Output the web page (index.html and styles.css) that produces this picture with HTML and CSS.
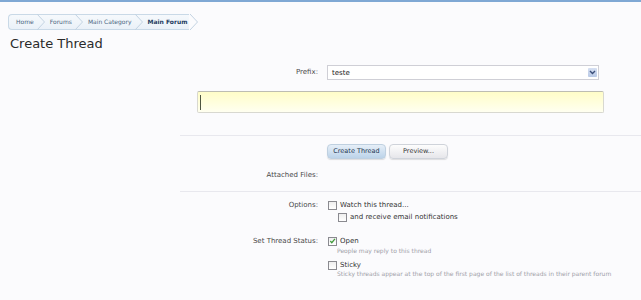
FILE: index.html
```html
<!DOCTYPE html>
<html>
<head>
<meta charset="utf-8">
<title>Create Thread</title>
<link rel="stylesheet" href="styles.css">
</head>
<body>
<div class="topbar"></div>
<nav class="breadcrumb">
  <span class="crumb first">Home</span>
  <svg class="chev" width="10" height="16" viewBox="0 0 10 16"><polyline points="1,0 8.5,8 1,16" fill="none" stroke="#c3d3e2" stroke-width="1"/></svg>
  <span class="crumb">Forums</span>
  <svg class="chev" width="10" height="16" viewBox="0 0 10 16"><polyline points="1,0 8.5,8 1,16" fill="none" stroke="#c3d3e2" stroke-width="1"/></svg>
  <span class="crumb">Main Category</span>
  <svg class="chev" width="10" height="16" viewBox="0 0 10 16"><polyline points="1,0 8.5,8 1,16" fill="none" stroke="#c3d3e2" stroke-width="1"/></svg>
  <span class="crumb current">Main Forum</span>
  <svg class="chev last" width="10" height="16" viewBox="0 0 10 16"><polyline points="1,0 8.5,8 1,16" fill="none" stroke="#c3d3e2" stroke-width="1"/></svg>
</nav>
<h1 class="title">Create Thread</h1>

<form class="form">
  <div class="row prefix-row">
    <div class="label">Prefix:</div>
    <div class="control">
      <div class="select">
        <span class="select-text">teste</span>
        <span class="select-btn"><svg width="7" height="5" viewBox="0 0 7 5"><polyline points="1,1 3.5,3.5 6,1" fill="none" stroke="#3b4f7a" stroke-width="1.4"/></svg></span>
      </div>
    </div>
  </div>

  <div class="editor"><span class="caret"></span></div>

  <div class="divider first"></div>

  <div class="row buttons-row">
    <div class="label"></div>
    <div class="control buttons">
      <span class="button primary">Create Thread</span>
      <span class="button">Preview...</span>
    </div>
  </div>

  <div class="row attach-row">
    <div class="label">Attached Files:</div>
  </div>

  <div class="divider second"></div>

  <div class="row options-row">
    <div class="label">Options:</div>
    <div class="control">
      <div class="check"><span class="box"></span>Watch this thread...</div>
      <div class="check indent"><span class="box"></span>and receive email notifications</div>
    </div>
  </div>

  <div class="row status-row">
    <div class="label">Set Thread Status:</div>
    <div class="control">
      <div class="check"><span class="box checked"><svg width="8" height="8" viewBox="0 0 8 8"><polyline points="1.5,4 3.2,6 6.8,1.5" fill="none" stroke="#3f9a3a" stroke-width="1.4"/></svg></span>Open</div>
      <div class="desc">People may reply to this thread</div>
      <div class="check sticky"><span class="box"></span>Sticky</div>
      <div class="desc">Sticky threads appear at the top of the first page of the list of threads in their parent forum</div>
    </div>
  </div>
</form>
</body>
</html>
```

FILE: styles.css
```css
html, body {
  margin: 0;
  padding: 0;
  background: #fbfbfd;
  font-family: "DejaVu Sans", Verdana, sans-serif;
  color: #444;
}

.topbar {
  height: 2px;
  background: #7fa8d4;
}

.breadcrumb {
  display: flex;
  align-items: stretch;
  margin: 12px 0 0 8px;
  height: 14px;
  width: fit-content;
  border: 1px solid #c9d9e7;
  border-right: none;
  border-radius: 4px 0 0 4px;
  background: linear-gradient(#f6f9fc, #eaf1f8);
  font-size: 6px;
  line-height: 14px;
}

.crumb {
  padding: 0 2px 0 4px;
  color: #4c6682;
}

.crumb.first {
  padding-left: 7px;
}

.crumb.current {
  font-weight: bold;
  color: #1c3b60;
}

.chev {
  margin: -1px 0;
  flex: none;
}

.chev.last {
  background: #fbfbfd;
}

.title {
  margin: 6px 0 0 10px;
  font-size: 13px;
  line-height: 16px;
  font-weight: normal;
  color: #2a2a2a;
}

.form {
  display: block;
}

.row {
  display: flex;
  align-items: flex-start;
}

.label {
  width: 318px;
  flex: none;
  text-align: right;
  font-size: 7px;
  line-height: 10px;
  color: #4a4a4a;
}

.control {
  margin-left: 9px;
}

.prefix-row {
  margin-top: 13px;
}

.prefix-row .label {
  line-height: 15px;
}

.select {
  width: 270px;
  height: 13px;
  border: 1px solid #cfcfd6;
  background: #fff;
  display: flex;
  align-items: center;
  justify-content: space-between;
  font-size: 7px;
  color: #222;
}

.select-text {
  padding-left: 4px;
}

.select-btn {
  width: 9px;
  height: 9px;
  margin-right: 1px;
  background: linear-gradient(#d6e0f2, #b9c9e6);
  border-radius: 1px;
  display: flex;
  align-items: center;
  justify-content: center;
}

.editor {
  margin: 11px 0 0 197px;
  width: 405px;
  height: 20px;
  border: 1px solid #d8d8d0;
  border-top-color: #bdbdb2;
  border-radius: 2px;
  background: linear-gradient(#fffdc8, #fffff0);
  display: flex;
  align-items: center;
}

.caret {
  width: 1px;
  height: 15px;
  margin-left: 2px;
  background: #4e5540;
}

.divider {
  margin-left: 180px;
  height: 0;
  border-top: 1px solid #e8e8ee;
}

.divider.first {
  margin-top: 22px;
}

.buttons-row {
  margin-top: 8px;
}

.buttons {
  display: flex;
  gap: 3px;
}

.button {
  width: 57px;
  height: 13px;
  border: 1px solid #cfd3da;
  border-radius: 4px;
  background: linear-gradient(#fdfdfd, #e6e6ea);
  box-shadow: 0 1px 1px rgba(0,0,0,0.12);
  font-size: 6.5px;
  line-height: 13px;
  text-align: center;
  color: #333;
}

.button.primary {
  background: linear-gradient(#e6eff8, #bcd3e9);
  border-color: #bfd0e0;
  color: #1d3550;
}

.attach-row {
  margin-top: 11px;
}

.divider.second {
  margin-top: 11px;
}

.options-row {
  margin-top: 8px;
}

.check {
  display: flex;
  align-items: center;
  font-size: 7px;
  line-height: 10px;
  color: #333;
  margin-left: 1px;
}

.check.indent {
  margin-top: 2px;
  margin-left: 11px;
}

.box {
  width: 7px;
  height: 7px;
  border: 1px solid #8a8a90;
  background: linear-gradient(#eeeeee, #ffffff);
  margin-right: 3px;
  flex: none;
  display: flex;
  align-items: center;
  justify-content: center;
}

.box svg {
  display: block;
}

.status-row {
  margin-top: 14px;
}

.desc {
  margin-left: 10px;
  margin-top: 1px;
  font-size: 6px;
  line-height: 8px;
  color: #a0a0a8;
  white-space: nowrap;
}

.check.sticky {
  margin-top: 5px;
}

.check.sticky + .desc {
  margin-top: 0;
}
```
